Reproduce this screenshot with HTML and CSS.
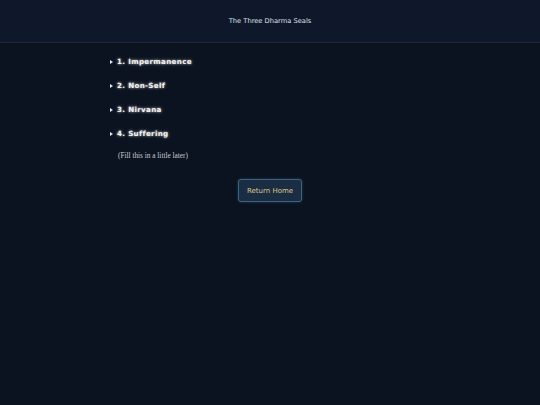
FILE: index.html
```html
<!DOCTYPE html>
<html lang="en">
<head>
<meta charset="utf-8">
<title>The Three Dharma Seals</title>
<link rel="stylesheet" href="styles.css">
</head>
<body>
<header class="topbar">
  <h1 class="title">The Three Dharma Seals</h1>
</header>
<main class="content">
  <details class="seal"><summary>1. Impermanence</summary></details>
  <details class="seal"><summary>2. Non-Self</summary></details>
  <details class="seal"><summary>3. Nirvana</summary></details>
  <details class="seal"><summary>4. Suffering</summary></details>
  <p class="note">(Fill this in a little later)</p>
  <div class="actions">
    <button class="home-btn" type="button">Return Home</button>
  </div>
</main>
</body>
</html>
```
FILE: styles.css
```css
html, body {
  margin: 0;
  padding: 0;
  background: #0c1320;
  height: 100%;
}
body {
  font-family: "DejaVu Sans", sans-serif;
  color: #e6e6e6;
}
.topbar {
  height: 42px;
  background: #0f182b;
  border-bottom: 1px solid #1e2838;
  display: flex;
  align-items: center;
  justify-content: center;
}
.title {
  margin: 0;
  font-size: 6.7px;
  font-weight: normal;
  color: #dfe3ea;
}
.content {
  width: 320px;
  margin: 0 auto;
  padding-top: 12px;
}
.seal {
  margin: 0 0 11px 0;
}
.seal summary {
  font-size: 7.1px;
  font-weight: bold;
  letter-spacing: 0.35px;
  color: #f2f2ee;
  text-shadow: 0 0 2px rgba(255,255,255,0.7), 0 0 4px rgba(255,255,255,0.35);
  line-height: 13px;
  cursor: pointer;
  list-style: none;
  display: flex;
  align-items: center;
}
.seal summary::-webkit-details-marker { display: none; }
.seal summary::before {
  content: "";
  width: 0;
  height: 0;
  border-top: 2.5px solid transparent;
  border-bottom: 2.5px solid transparent;
  border-left: 3.5px solid #e8e8e8;
  margin-right: 4px;
}
.note {
  margin: 11px 0 0 8px;
  font-family: "Liberation Serif", serif;
  font-size: 7.3px;
  color: #c8ccd4;
}
.actions {
  display: flex;
  justify-content: center;
  margin-top: 19px;
}
.home-btn {
  width: 64px;
  height: 23px;
  background: #1b2d42;
  border: 1px solid #3a6480;
  border-radius: 3px;
  color: #d9c88f;
  font-family: "DejaVu Sans", sans-serif;
  font-size: 7px;
  padding: 0;
  box-shadow: 0 0 3px rgba(70,140,190,0.35);
}
```
